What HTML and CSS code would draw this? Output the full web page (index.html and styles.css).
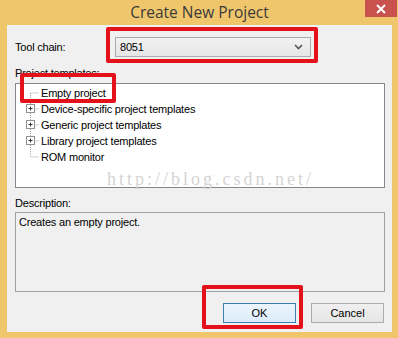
FILE: index.html
```html
<!DOCTYPE html>
<html>
<head>
    <title>Create New Project</title>
    <link rel="stylesheet" href="styles.css">
</head>
<body>
    <div class="window">
        <div class="titlebar">
            <span class="title">Create New Project</span>
            <span class="close">
                <svg width="10" height="10" viewBox="0 0 10 10"><path d="M1 1L9 9M9 1L1 9" stroke="#fff" stroke-width="2"/></svg>
            </span>
        </div>

        <div class="client">
            <div class="toolchain-row">
                <label class="label">Tool chain:</label>
                <div class="combo">
                    <span>8051</span>
                    <svg width="9" height="6" viewBox="0 0 9 6"><path d="M1 1L4.5 4.5L8 1" stroke="#555" stroke-width="1.6" fill="none"/></svg>
                </div>
            </div>

            <div class="label section-label">Project templates:</div>
            <div class="tree">
                <div class="node">
                    <svg class="twig" width="25" height="16"><path d="M14.5 8V16M14.5 8H23" class="dots"/></svg>
                    <span>Empty project</span>
                </div>
                <div class="node">
                    <svg class="twig" width="25" height="16"><path d="M14.5 0V16M14.5 8H23" class="dots"/><rect x="10.5" y="3.5" width="8" height="8" class="box"/><path d="M12.5 7.5H16.5M14.5 5.5V9.5" class="plus"/></svg>
                    <span>Device-specific project templates</span>
                </div>
                <div class="node">
                    <svg class="twig" width="25" height="16"><path d="M14.5 0V16M14.5 8H23" class="dots"/><rect x="10.5" y="3.5" width="8" height="8" class="box"/><path d="M12.5 7.5H16.5M14.5 5.5V9.5" class="plus"/></svg>
                    <span>Generic project templates</span>
                </div>
                <div class="node">
                    <svg class="twig" width="25" height="16"><path d="M14.5 0V16M14.5 8H23" class="dots"/><rect x="10.5" y="3.5" width="8" height="8" class="box"/><path d="M12.5 7.5H16.5M14.5 5.5V9.5" class="plus"/></svg>
                    <span>Library project templates</span>
                </div>
                <div class="node">
                    <svg class="twig" width="25" height="16"><path d="M14.5 0V8M14.5 8H23" class="dots"/></svg>
                    <span>ROM monitor</span>
                </div>
            </div>

            <div class="label section-label desc-label">Description:</div>
            <div class="description">Creates an empty project.</div>

            <div class="buttons">
                <button class="btn default">OK</button>
                <button class="btn">Cancel</button>
            </div>
        </div>

        <div class="watermark">http://blog.csdn.net/</div>
        <div class="mark mark-combo"></div>
        <div class="mark mark-empty"></div>
        <div class="mark mark-ok"></div>
    </div>
</body>
</html>
```

FILE: styles.css
```css
body {
    margin: 0;
    font-family: "Liberation Sans", Arial, sans-serif;
    font-size: 11px;
    letter-spacing: -0.2px;
    color: #000;
}
.window {
    position: relative;
    width: 398px;
    height: 338px;
    background: #f0c66d;
    box-sizing: border-box;
    padding: 0 6px 6px 7px;
}
.titlebar {
    height: 25px;
    display: flex;
    align-items: center;
    justify-content: center;
    position: relative;
}
.title {
    font-family: "Open Sans", "Noto Sans", sans-serif;
    font-size: 15.5px;
    letter-spacing: 0;
    color: #3a3a3a;
    margin-left: 0;
    margin-top: -2px;
}
.close {
    position: absolute;
    top: 0;
    right: -5px;
    width: 32px;
    height: 17px;
    background: #c9524f;
    display: flex;
    align-items: center;
    justify-content: center;
}
.client {
    background: #f0f0f0;
    height: 307px;
    box-sizing: border-box;
    padding: 12px 7px 0 8px;
    display: flex;
    flex-direction: column;
}
.toolchain-row {
    display: flex;
    align-items: center;
    height: 20px;
}
.toolchain-row .label {
    width: 100px;
}
.combo {
    width: 196px;
    height: 20px;
    box-sizing: border-box;
    border: 1px solid #acacac;
    background: linear-gradient(#f2f2f2, #e6e6e6);
    display: flex;
    align-items: center;
    justify-content: space-between;
    padding: 0 7px 0 4px;
}
.label {
    line-height: 14px;
}
.section-label {
    margin-top: 9px;
    margin-bottom: 3px;
}
.desc-label {
    margin-top: 8px;
    margin-bottom: 2px;
}
.tree {
    height: 105px;
    box-sizing: border-box;
    border: 1px solid #828790;
    background: #fff;
    padding-top: 1px;
}
.node {
    display: flex;
    align-items: center;
    height: 16px;
}
.twig {
    flex: none;
}
.dots {
    stroke: #a0a0a0;
    stroke-width: 1;
    stroke-dasharray: 1 1;
    fill: none;
}
.box {
    fill: #fff;
    stroke: #919191;
}
.plus {
    stroke: #333;
    stroke-width: 1;
}
.description {
    height: 80px;
    box-sizing: border-box;
    border: 1px solid #a0a0a0;
    padding: 3px 3px;
    background: #f0f0f0;
}
.buttons {
    display: flex;
    justify-content: flex-end;
    gap: 15px;
    margin-top: 11px;
    margin-right: 1px;
}
.btn {
    width: 73px;
    height: 20px;
    font-family: "Liberation Sans", Arial, sans-serif;
    font-size: 11px;
    border: 1px solid #acacac;
    background: linear-gradient(#f0f0f0, #e5e5e5);
    padding: 0;
}
.btn.default {
    border-color: #3c7fb1;
    background: linear-gradient(#ecf4fc, #dcecfc);
}
.watermark {
    position: absolute;
    left: 107px;
    top: 169px;
    font-family: "Liberation Serif", serif;
    font-size: 18px;
    letter-spacing: 3px;
    color: #d4d4d4;
}
.mark {
    position: absolute;
    border: 4px solid #e4101a;
    border-radius: 2px;
    box-sizing: border-box;
}
.mark-combo {
    left: 106px;
    top: 27px;
    width: 212px;
    height: 36px;
}
.mark-empty {
    left: 20px;
    top: 73px;
    width: 96px;
    height: 30px;
}
.mark-ok {
    left: 202px;
    top: 285px;
    width: 101px;
    height: 44px;
}
```
